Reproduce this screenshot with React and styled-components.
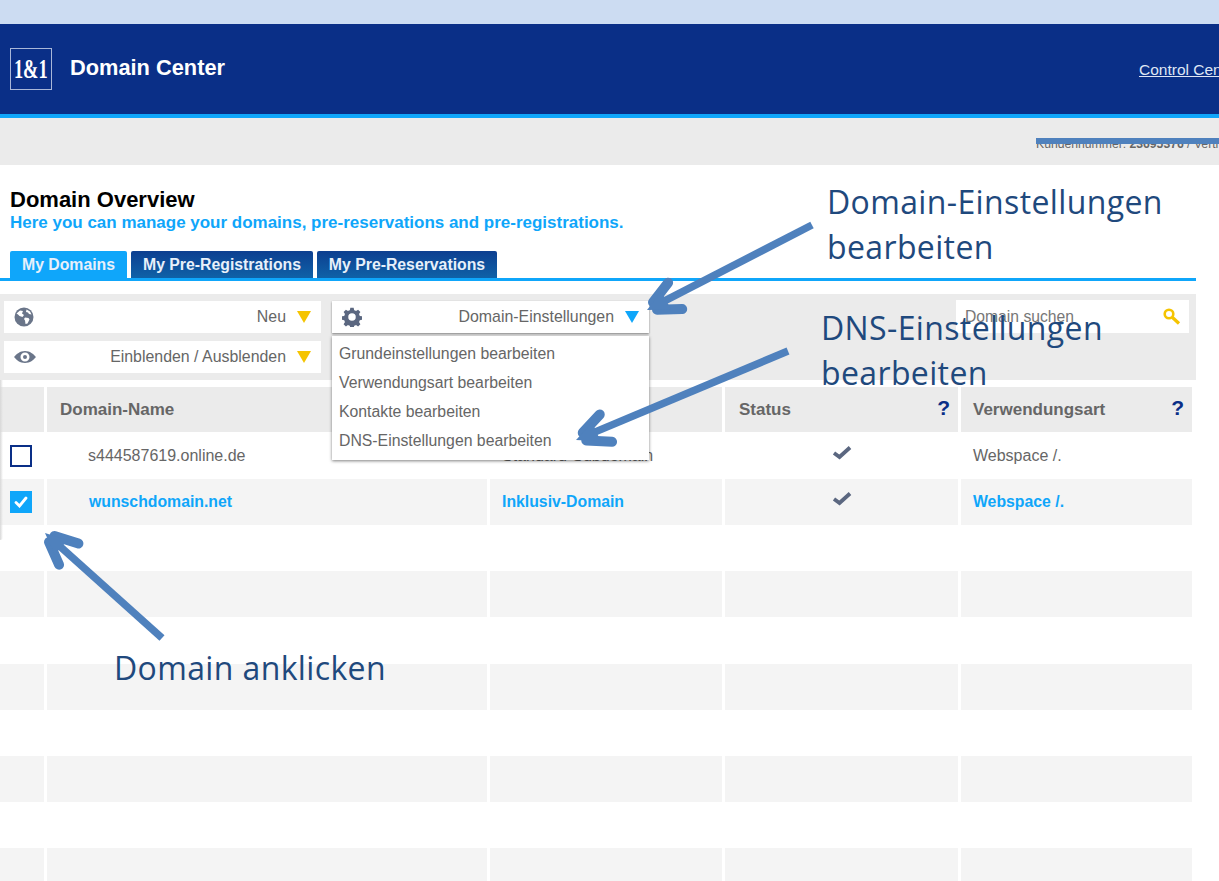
import React from 'react';
import styled, { createGlobalStyle } from 'styled-components';

const GlobalStyle = createGlobalStyle`
  html, body {
    margin: 0;
    padding: 0;
    background: #fff;
    overflow: hidden;
  }
  * { box-sizing: border-box; }
`;

const Page = styled.div`
  position: relative;
  width: 1219px;
  height: 881px;
  overflow: hidden;
  font-family: "Liberation Sans", Arial, sans-serif;
  color: #666;
`;

const TopStrip = styled.div`
  height: 24px;
  background: #ccdcf2;
`;

const Header = styled.header`
  height: 94px;
  background: #0a2f87;
  border-bottom: 4px solid #0fa6fa;
  display: flex;
  align-items: center;
  padding: 0 0 0 10px;
  position: relative;
`;

const Logo = styled.div`
  width: 42px;
  height: 42px;
  border: 1px solid #a9b7d8;
  display: flex;
  align-items: center;
  justify-content: center;
`;

const LogoText = styled.span`
  display: inline-block;
  color: #fff;
  font-family: "Liberation Serif", serif;
  font-weight: bold;
  font-size: 27px;
  line-height: 1;
  transform: scaleX(0.68);
`;

const Brand = styled.div`
  margin-left: 18px;
  color: #fff;
  font-weight: bold;
  font-size: 21.8px;
  margin-top: -3px;
`;

const ControlLink = styled.a`
  position: absolute;
  left: 1139px;
  top: 37px;
  color: #dfe6f4;
  font-size: 15.5px;
  text-decoration: underline;
  white-space: nowrap;
`;

const InfoBar = styled.div`
  height: 47px;
  background: #ebebeb;
  position: relative;
  overflow: hidden;
`;

const CustomerNo = styled.div`
  position: absolute;
  left: 1036px;
  top: 19px;
  font-size: 12.2px;
  color: #666;
  white-space: nowrap;

  b { font-weight: bold; }
`;

const Content = styled.main`
  padding-top: 25px;
`;

const Title = styled.h1`
  margin: 0 0 0 10px;
  font-size: 22px;
  line-height: 20px;
  color: #000;
  font-weight: bold;
`;

const Subtitle = styled.p`
  margin: 3px 0 0 10px;
  font-size: 16.990px;
  line-height: 20px;
  color: #0fa6fa;
  font-weight: bold;
`;

const Tabs = styled.div`
  width: 1196px;
  margin-top: 18px;
  padding-left: 10px;
  height: 30px;
  border-bottom: 3px solid #0fa6fa;
  display: flex;
  gap: 4px;
`;

const Tab = styled.div`
  height: 27px;
  width: ${p => p.$w}px;
  border-radius: 2px 2px 0 0;
  color: #e8f0fa;
  background: ${p => (p.$active ? '#0fa6fa' : 'linear-gradient(#0d3f90, #0f62a8)')};
  font-size: 15.8px;
  font-weight: bold;
  display: flex;
  align-items: center;
  justify-content: center;
  white-space: nowrap;
`;

const Toolbar = styled.div`
  width: 1196px;
  height: 86px;
  margin-top: 13px;
  background: #ebebeb;
  display: flex;
  padding: 7px 0 0 4px;
  position: relative;
`;

const ToolColumn = styled.div`
  width: 317px;
  display: flex;
  flex-direction: column;
  gap: 8px;
`;

const DropButton = styled.div`
  width: 317px;
  height: 32px;
  background: #fff;
  display: flex;
  align-items: center;
  padding: 0 10px;
  font-size: 15.9px;
  color: #666;
  ${p => p.$open && 'box-shadow: 0 1px 2px rgba(0,0,0,.45);'}

  span { margin-left: auto; }
  svg:first-child { flex: none; }
`;

const Tri = styled.i`
  margin-left: 11px;
  width: 0;
  height: 0;
  border-left: 7px solid transparent;
  border-right: 7px solid transparent;
  border-top: 12px solid ${p => p.$color};
  flex: none;
`;

const MenuColumn = styled.div`
  margin-left: 11px;
  position: relative;
`;

const Menu = styled.ul`
  position: absolute;
  z-index: 3;
  left: 0;
  top: 35px;
  width: 317px;
  height: 124px;
  margin: 0;
  padding: 3px 0 0 7px;
  list-style: none;
  background: #fff;
  box-shadow: 0 1px 3px rgba(0,0,0,.5);
`;

const MenuItem = styled.li`
  height: 29px;
  line-height: 29px;
  font-size: 15.8px;
  color: #666;
  white-space: nowrap;
`;

const SearchBox = styled.div`
  position: absolute;
  left: 956px;
  top: 6px;
  width: 233px;
  height: 33px;
  background: #fff;
  display: flex;
  align-items: center;
  justify-content: space-between;
  padding: 0 8px 0 9px;
  font-size: 15.7px;
  color: #777;
`;

const Table = styled.div`
  margin-top: 7px;
  width: 1192px;
  display: grid;
  grid-template-columns: 44px 440px 232px 233px 231px;
  grid-auto-rows: 46.1px;
  column-gap: 3px;
  position: relative;

  &::before {
    content: '';
    position: absolute;
    left: 0;
    top: -7px;
    width: 3px;
    height: 160px;
    background: linear-gradient(90deg, #d8d8d8, rgba(216,216,216,0));
    border-radius: 0 0 3px 0;
  }
`;

const HeadCell = styled.div`
  background: #ebebeb;
  height: 45px;
  display: flex;
  align-items: center;
  justify-content: space-between;
  padding: 0 8px 0 ${p => p.$pad || 13}px;
  font-size: 17px;
  font-weight: bold;
  color: #666;
`;

const Help = styled.span`
  color: #0a2f87;
  font-size: 21px;
  font-weight: bold;
  margin-top: -4px;
`;

const Cell = styled.div`
  background: ${p => (p.$alt ? '#f4f4f4' : '#fff')};
  display: flex;
  align-items: center;
  justify-content: ${p => (p.$center ? 'center' : 'flex-start')};
  padding-left: ${p => p.$pad || 0}px;
  font-size: ${p => (p.$link ? 15.8 : 16)}px;
  font-weight: ${p => (p.$link ? 'bold' : 'normal')};
  color: ${p => (p.$link ? '#0fa6fa' : '#666')};
  white-space: nowrap;

  svg { margin-top: ${p => (p.$center ? -8 : 0)}px; }
`;

const Box = styled.div`
  width: 22px;
  height: 22px;
  margin-left: 10px;
  border: 2px solid #0a2f87;
  background: #fff;
`;

const CheckedBox = styled.div`
  width: 22px;
  height: 22px;
  margin-left: 10px;
  background: #0fa6fa;
  display: flex;
  align-items: center;
  justify-content: center;
`;

const Note = styled.div`
  position: absolute;
  z-index: 5;
  left: ${p => p.$x}px;
  top: ${p => p.$y}px;
  font-family: "Open Sans", "Noto Sans", sans-serif;
  font-size: 32px;
  line-height: 45px;
  letter-spacing: 0.37px;
  color: #1f497d;
  white-space: nowrap;
`;

const ArrowLayer = styled.svg`
  position: absolute;
  z-index: 4;
  left: 0;
  top: 0;
  pointer-events: none;
`;

const RuleLine = styled.div`
  position: absolute;
  z-index: 4;
  left: 1036px;
  top: 138px;
  width: 183px;
  height: 6px;
  background: #4f81bd;
`;

const Gear = () => (
  <svg width="20" height="20" viewBox="0 0 24 24" fill="#5b6780">
    <path fillRule="evenodd" d="M10 1h4l.6 3a8.500 8.500 0 0 1 2.200.9l2.500-1.700 2.800 2.800-1.700 2.500c.4.700.700 1.400.9 2.200l3 .6v4l-3 .6a8.500 8.500 0 0 1-.9 2.200l1.700 2.500-2.800 2.800-2.500-1.700c-.7.400-1.400.700-2.200.9l-.6 3h-4l-.6-3a8.500 8.500 0 0 1-2.200-.9l-2.500 1.700-2.800-2.800 1.700-2.500a8.500 8.500 0 0 1-.9-2.200l-3-.6v-4l3-.6c.2-.8.500-1.500.9-2.200L1.900 6l2.800-2.800 2.500 1.700c.7-.4 1.400-.7 2.200-.9L10 1Zm2 6.500a4.500 4.500 0 1 0 0 9 4.500 4.500 0 0 0 0-9Z" />
  </svg>
);

const Globe = () => (
  <svg width="20" height="20" viewBox="0 0 20 20">
    <circle cx="10" cy="10" r="9.500" fill="#6a7589" />
    <path fill="#fff" d="M2.500 6.500 6 3.500l3 .5-1 2.500 2 1.500-1.500 2-3-1-1.500-1.500ZM11 10.500l3.500.5 1 1.500-2 4-2 .5-.5-3.500-1-1.500ZM12.500 2.500l3.500 2 1.500 3-2.500-.5-1-1.500-2-.5Z" />
  </svg>
);

const Eye = () => (
  <svg width="22" height="14" viewBox="0 0 22 14">
    <path fill="#6a7589" fillRule="evenodd" d="M11 1c5 0 8.500 3 11 6-2.500 3-6 6-11 6S2.500 10 0 7c2.500-3 6-6 11-6Zm0 1.500a4.500 4.500 0 1 0 0 9 4.500 4.500 0 0 0 0-9Zm0 2.500a2 2 0 1 1 0 4 2 2 0 0 1 0-4Z" />
  </svg>
);

const Key = () => (
  <svg width="18" height="18" viewBox="0 0 18 18">
    <circle cx="6" cy="6" r="4.300" fill="none" stroke="#f5c400" strokeWidth="2.600" />
    <path d="M9.500 9.500 16 15.500" stroke="#f5c400" strokeWidth="3.200" />
  </svg>
);

const StatusCheck = () => (
  <svg width="20" height="15" viewBox="0 0 20 15">
    <path d="M2 8 7.500 12 18 2.500" fill="none" stroke="#5b6780" strokeWidth="3.800" />
  </svg>
);

const WhiteCheck = () => (
  <svg width="14" height="12" viewBox="0 0 14 12">
    <path d="M2 6.500 5.500 10 12 2" fill="none" stroke="#fff" strokeWidth="2.800" strokeLinecap="round" />
  </svg>
);

const lerp = (p, q, t) => [p[0] + (q[0] - p[0]) * t, p[1] + (q[1] - p[1]) * t];

// shaft, two rounded wings and a solid head, as in the drawn-on arrows
const Arrow = ({ tail, tip, a, b }) => {
  const line = (p, q) => `M${p[0]} ${p[1]}L${q[0]} ${q[1]}`;
  const a1 = lerp(tip, a, 0.6);
  const b1 = lerp(tip, b, 0.6);
  return (
    <g stroke="#4f81bd" fill="none">
      <path d={line(tail, lerp(tip, tail, 0.06))} strokeWidth="7.500" />
      <path d={line(lerp(tip, a, 0.25), lerp(a, tip, 0.12))} strokeWidth="10" strokeLinecap="round" />
      <path d={line(lerp(tip, b, 0.25), lerp(b, tip, 0.12))} strokeWidth="10" strokeLinecap="round" />
      <path d={`M${tip[0]} ${tip[1]}L${a1[0]} ${a1[1]}L${b1[0]} ${b1[1]}Z`} fill="#4f81bd" stroke="none" />
    </g>
  );
};

const columns = [
  { label: 'Domain-Name', pad: 13 },
  { label: '', help: true },
  { label: 'Status', help: true, pad: 14 },
  { label: 'Verwendungsart', help: true, pad: 12 },
];

const rows = [
  { name: 's444587619.online.de', type: 'Standard-Subdomain' },
  { name: 'wunschdomain.net', type: 'Inklusiv-Domain', link: true, alt: true, checked: true },
];

const emptyRows = [false, true, false, true, false, true, false, true];

const App = () => {
  return (
    <Page>
      <GlobalStyle />
      <TopStrip />
      <Header>
        <Logo><LogoText>1&amp;1</LogoText></Logo>
        <Brand>Domain Center</Brand>
        <ControlLink>Control Center</ControlLink>
      </Header>
      <InfoBar>
        <CustomerNo>Kundennummer: <b>23695376</b> / Vertrag</CustomerNo>
      </InfoBar>
      <Content>
        <Title>Domain Overview</Title>
        <Subtitle>Here you can manage your domains, pre-reservations and pre-registrations.</Subtitle>
        <Tabs>
          <Tab $active $w={117}>My Domains</Tab>
          <Tab $w={182}>My Pre-Registrations</Tab>
          <Tab $w={180}>My Pre-Reservations</Tab>
        </Tabs>
        <Toolbar>
          <ToolColumn>
            <DropButton><Globe /><span>Neu</span><Tri $color="#f5c400" /></DropButton>
            <DropButton><Eye /><span>Einblenden / Ausblenden</span><Tri $color="#f5c400" /></DropButton>
          </ToolColumn>
          <MenuColumn>
            <DropButton $open><Gear /><span>Domain-Einstellungen</span><Tri $color="#0fa6fa" /></DropButton>
            <Menu>
              <MenuItem>Grundeinstellungen bearbeiten</MenuItem>
              <MenuItem>Verwendungsart bearbeiten</MenuItem>
              <MenuItem>Kontakte bearbeiten</MenuItem>
              <MenuItem>DNS-Einstellungen bearbeiten</MenuItem>
            </Menu>
          </MenuColumn>
          <SearchBox>Domain suchen<Key /></SearchBox>
        </Toolbar>
        <Table>
          <HeadCell />
          {columns.map((c, i) => (
            <HeadCell key={i} $pad={c.pad}>
              {c.label}
              {c.help && <Help>?</Help>}
            </HeadCell>
          ))}
          {rows.map(r => (
            <React.Fragment key={r.name}>
              <Cell $alt={r.alt}>{r.checked ? <CheckedBox><WhiteCheck /></CheckedBox> : <Box />}</Cell>
              <Cell $alt={r.alt} $link={r.link} $pad={r.link ? 42 : 41}>{r.name}</Cell>
              <Cell $alt={r.alt} $link={r.link} $pad={12}>{r.type}</Cell>
              <Cell $alt={r.alt} $center><StatusCheck /></Cell>
              <Cell $alt={r.alt} $link={r.link} $pad={12}>Webspace /.</Cell>
            </React.Fragment>
          ))}
          {emptyRows.map((alt, i) => (
            <React.Fragment key={i}>
              <Cell $alt={alt} />
              <Cell $alt={alt} />
              <Cell $alt={alt} />
              <Cell $alt={alt} />
              <Cell $alt={alt} />
            </React.Fragment>
          ))}
        </Table>
      </Content>

      <RuleLine />
      <ArrowLayer width="1219" height="881" viewBox="0 0 1219 881">
        <Arrow tail={[812, 225]} tip={[647, 310]} a={[671, 279]} b={[687, 309]} />
        <Arrow tail={[788, 351]} tip={[576, 440]} a={[603, 411]} b={[617, 442]} />
        <Arrow tail={[162, 638]} tip={[45, 533]} a={[61, 569]} b={[83, 545]} />
      </ArrowLayer>
      <Note $x={827} $y={179}>Domain-Einstellungen<br />bearbeiten</Note>
      <Note $x={821} $y={305}>DNS-Einstellungen<br />bearbeiten</Note>
      <Note $x={114} $y={645}>Domain anklicken</Note>
    </Page>
  );
};

export default App;
